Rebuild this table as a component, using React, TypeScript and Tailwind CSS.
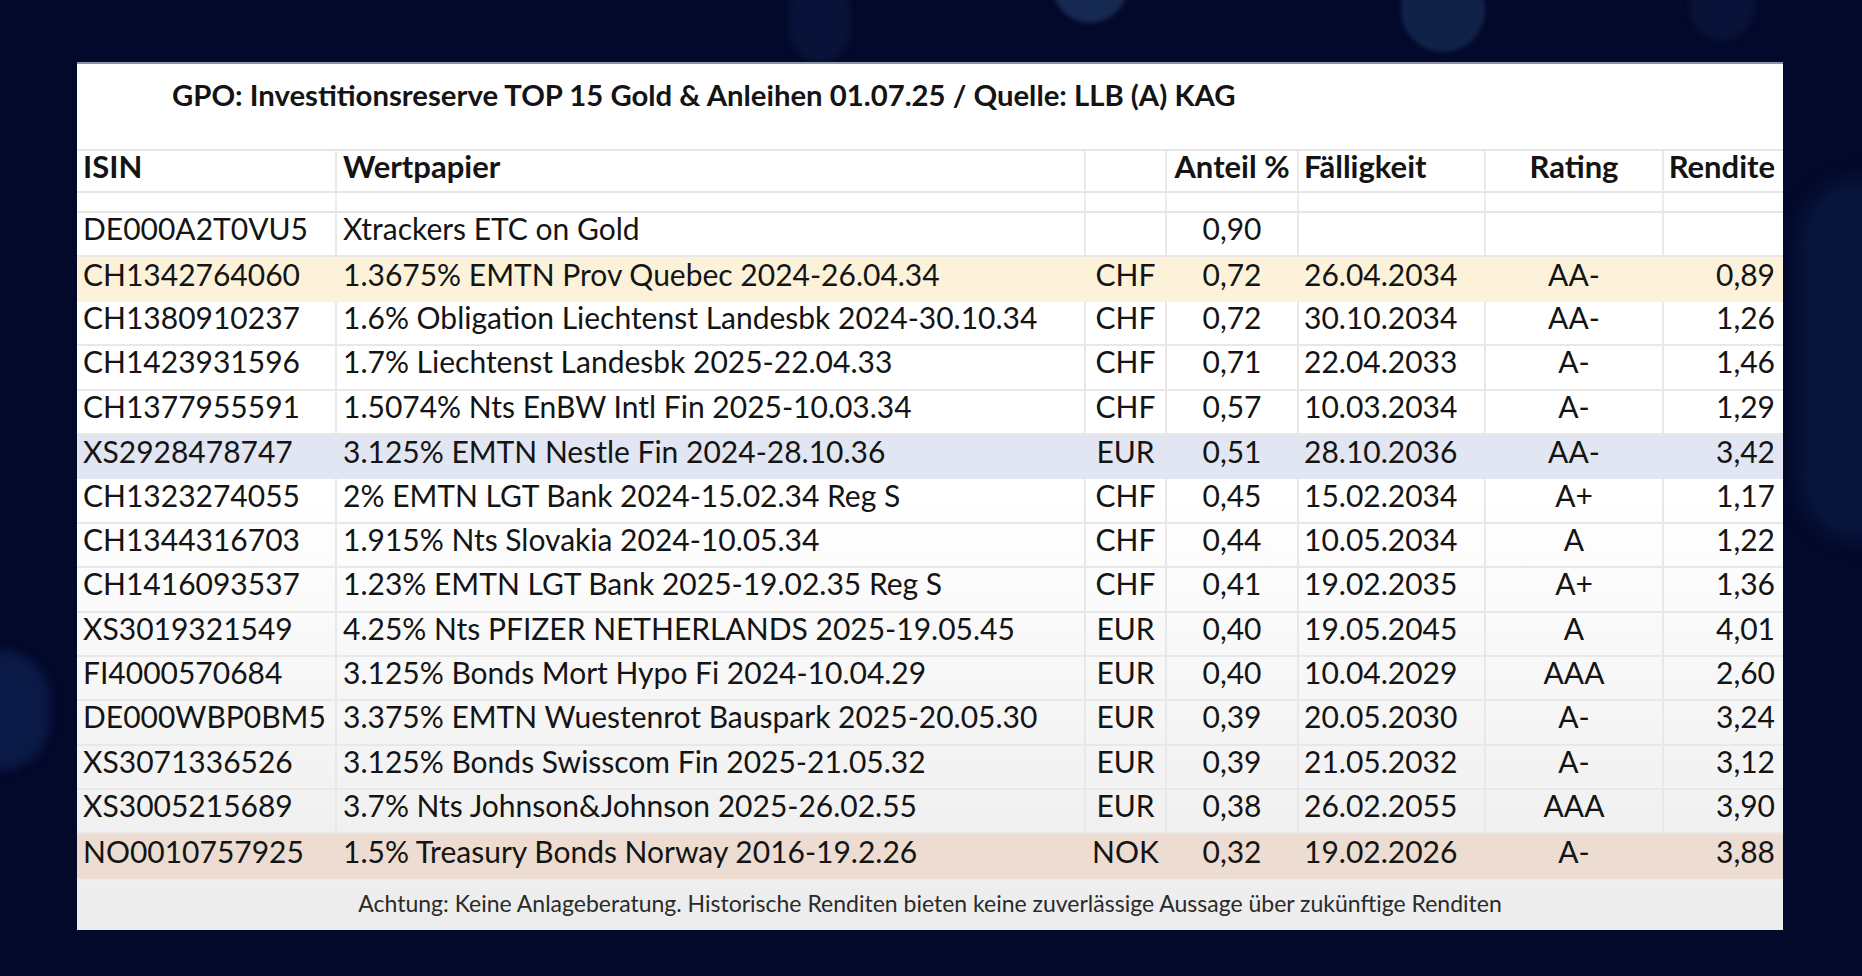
type Row = {
  isin: string;
  name: string;
  cur: string;
  share: string;
  due: string;
  rating: string;
  yld: string;
  tone?: 'gold' | 'blue' | 'rose';
};

const ROWS: Row[] = [
  { isin: 'DE000A2T0VU5', name: 'Xtrackers ETC on Gold', cur: '', share: '0,90', due: '', rating: '', yld: '' },
  { isin: 'CH1342764060', name: '1.3675% EMTN Prov Quebec 2024-26.04.34', cur: 'CHF', share: '0,72', due: '26.04.2034', rating: 'AA-', yld: '0,89', tone: 'gold' },
  { isin: 'CH1380910237', name: '1.6% Obligation Liechtenst Landesbk 2024-30.10.34', cur: 'CHF', share: '0,72', due: '30.10.2034', rating: 'AA-', yld: '1,26' },
  { isin: 'CH1423931596', name: '1.7% Liechtenst Landesbk 2025-22.04.33', cur: 'CHF', share: '0,71', due: '22.04.2033', rating: 'A-', yld: '1,46' },
  { isin: 'CH1377955591', name: '1.5074% Nts EnBW Intl Fin 2025-10.03.34', cur: 'CHF', share: '0,57', due: '10.03.2034', rating: 'A-', yld: '1,29' },
  { isin: 'XS2928478747', name: '3.125% EMTN Nestle Fin 2024-28.10.36', cur: 'EUR', share: '0,51', due: '28.10.2036', rating: 'AA-', yld: '3,42', tone: 'blue' },
  { isin: 'CH1323274055', name: '2% EMTN LGT Bank 2024-15.02.34 Reg S', cur: 'CHF', share: '0,45', due: '15.02.2034', rating: 'A+', yld: '1,17' },
  { isin: 'CH1344316703', name: '1.915% Nts Slovakia 2024-10.05.34', cur: 'CHF', share: '0,44', due: '10.05.2034', rating: 'A', yld: '1,22' },
  { isin: 'CH1416093537', name: '1.23% EMTN LGT Bank 2025-19.02.35 Reg S', cur: 'CHF', share: '0,41', due: '19.02.2035', rating: 'A+', yld: '1,36' },
  { isin: 'XS3019321549', name: '4.25% Nts PFIZER NETHERLANDS 2025-19.05.45', cur: 'EUR', share: '0,40', due: '19.05.2045', rating: 'A', yld: '4,01' },
  { isin: 'FI4000570684', name: '3.125% Bonds Mort Hypo Fi 2024-10.04.29', cur: 'EUR', share: '0,40', due: '10.04.2029', rating: 'AAA', yld: '2,60' },
  { isin: 'DE000WBP0BM5', name: '3.375% EMTN Wuestenrot Bauspark 2025-20.05.30', cur: 'EUR', share: '0,39', due: '20.05.2030', rating: 'A-', yld: '3,24' },
  { isin: 'XS3071336526', name: '3.125% Bonds Swisscom Fin 2025-21.05.32', cur: 'EUR', share: '0,39', due: '21.05.2032', rating: 'A-', yld: '3,12' },
  { isin: 'XS3005215689', name: '3.7% Nts Johnson&Johnson 2025-26.02.55', cur: 'EUR', share: '0,38', due: '26.02.2055', rating: 'AAA', yld: '3,90' },
  { isin: 'NO0010757925', name: '1.5% Treasury Bonds Norway 2016-19.2.26', cur: 'NOK', share: '0,32', due: '19.02.2026', rating: 'A-', yld: '3,88', tone: 'rose' },
];

// column widths taken from the slide's gridlines
const COLS = 'grid grid-cols-[260px_749px_81px_132px_187px_178px_119px]';

export default function App() {
  return (
    <div className="relative w-[1862px] h-[976px] overflow-hidden bg-[#03092b] pl-[77px] pt-[62px] font-['Lato',sans-serif] text-[#141414]">
      {/* bokeh */}
      <div className="absolute left-[1052px] -top-[53px] w-[76px] h-[76px] rounded-full bg-[#2a4a78]/50 blur-[2px]" />
      <div className="absolute left-[1401px] -top-[34px] w-[84px] h-[86px] rounded-full bg-[#24426f]/45 blur-[2px]" />
      <div className="absolute left-[790px] -top-[20px] w-[60px] h-[82px] rounded-full bg-[#1c3362]/25 blur-[3px]" />
      <div className="absolute left-[1690px] -top-[30px] w-[64px] h-[70px] rounded-full bg-[#1c3362]/25 blur-[3px]" />
      <div className="absolute -left-[50px] top-[650px] w-[100px] h-[120px] rounded-full bg-[#0f2456]/60 blur-[4px]" />
      <div className="absolute left-[1800px] top-[180px] w-[120px] h-[360px] rounded-full bg-[#122a5c]/40 blur-[10px]" />

      <div className="relative w-[1706px] h-[868px] border-t-2 border-[#8d93a6] bg-gradient-to-b from-white via-white to-[#ececec] flex flex-col">
        <div className="h-[85px] pl-[95px] pb-[24px] flex items-center">
          <h1 className="text-[29.3px] font-bold leading-none">
            GPO: Investitionsreserve TOP 15 Gold &amp; Anleihen 01.07.25 / Quelle: LLB (A) KAG
          </h1>
        </div>

        {/* header */}
        <div className={`${COLS} h-[44px] border-y-2 border-[#e6e6e6] text-[31px] font-bold leading-none`}>
          <div className="border-r-2 border-[#e9e9e9] pl-[6px] pb-[10px] flex items-center">ISIN</div>
          <div className="border-r-2 border-[#e9e9e9] pl-[6px] pb-[10px] flex items-center">Wertpapier</div>
          <div className="border-r-2 border-[#e9e9e9]" />
          <div className="border-r-2 border-[#e9e9e9] pb-[10px] flex items-center justify-center whitespace-nowrap">Anteil %</div>
          <div className="border-r-2 border-[#e9e9e9] pl-[5px] pb-[10px] flex items-center">Fälligkeit</div>
          <div className="border-r-2 border-[#e9e9e9] pb-[10px] flex items-center justify-center">Rating</div>
          <div className="pr-[8px] pb-[10px] flex items-center justify-end">Rendite</div>
        </div>
        <div className={`${COLS} h-[20px] border-b-2 border-[#e6e6e6]`}>
          <div className="border-r-2 border-[#ededed]" />
          <div className="border-r-2 border-[#ededed]" />
          <div className="border-r-2 border-[#ededed]" />
          <div className="border-r-2 border-[#ededed]" />
          <div className="border-r-2 border-[#ededed]" />
          <div className="border-r-2 border-[#ededed]" />
          <div />
        </div>

        {ROWS.map((r) => {
          const bg =
            r.tone === 'gold'
              ? 'bg-[#fcf2da]'
              : r.tone === 'blue'
                ? 'bg-[#e2e6f2]'
                : r.tone === 'rose'
                  ? 'bg-[#ecdcd1]'
                  : '';
          const line = r.tone ? 'border-transparent' : 'border-[#e8e8e8]';
          return (
            <div
              key={r.isin}
              className={`${COLS} h-[44.4px] text-[30px] leading-none ${bg} ${r.tone ? '' : 'border-b-2 border-[#e8e8e8]'}`}
            >
              <div className={`border-r-2 ${line} pl-[6px] flex items-center pb-[12px]`}>{r.isin}</div>
              <div className={`border-r-2 ${line} pl-[6px] flex items-center pb-[12px] whitespace-nowrap`}>{r.name}</div>
              <div className={`border-r-2 ${line} flex items-center justify-center pb-[12px]`}>{r.cur}</div>
              <div className={`border-r-2 ${line} flex items-center justify-center pb-[12px]`}>{r.share}</div>
              <div className={`border-r-2 ${line} pl-[5px] flex items-center pb-[12px]`}>{r.due}</div>
              <div className={`border-r-2 ${line} flex items-center justify-center pb-[12px]`}>{r.rating}</div>
              <div className="pr-[8px] flex items-center justify-end pb-[12px]">{r.yld}</div>
            </div>
          );
        })}

        <div className="flex-1 flex items-center justify-center">
          <p className="text-[23px] text-[#2a2a2a] leading-none pb-[2px]">
            Achtung: Keine Anlageberatung. Historische Renditen bieten keine zuverlässige Aussage über zukünftige Renditen
          </p>
        </div>
      </div>
    </div>
  );
}
